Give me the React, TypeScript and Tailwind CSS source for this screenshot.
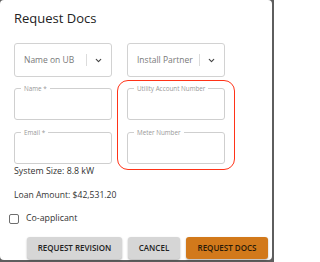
import { ChevronDown } from 'lucide-react';

function SelectBox({ label }: { label: string }) {
  return (
    <div className="flex h-[34px] items-center rounded-[3px] border border-[#d2d2d2] bg-white pl-[9px] pr-[8px]">
      <span className="flex-1 truncate text-[8.5px] text-[#7a7a7a]">{label}</span>
      <span className="mr-[7px] h-[12px] w-px bg-[#dcdcdc]" />
      <ChevronDown className="h-[9px] w-[9px] text-[#444]" strokeWidth={3} />
    </div>
  );
}

function TextField({ label }: { label: string }) {
  return (
    <div className="relative h-[32px] rounded-[3px] border border-[#cfcfcf] bg-white">
      <span className="absolute -top-[4px] left-[6px] bg-white px-[3px] text-[6.3px] leading-[7px] text-[#999]">
        {label}
      </span>
    </div>
  );
}

export default function App() {
  return (
    <div className="h-[262px] w-[274px] bg-[#5e5e5e] font-['Open_Sans',sans-serif]">
      <div className="relative h-[260px] w-[272px] rounded-[4px] bg-white">
        <h2 className="pl-[14px] pt-[10px] text-[13px] font-medium leading-[16px] text-[#222]">Request Docs</h2>

        <div className="relative ml-[14px] mt-[17px] grid w-[211px] grid-cols-[98px_98px] gap-x-[15px]">
          <SelectBox label="Name on UB" />
          <SelectBox label="Install Partner" />
          <div className="mt-[11px]">
            <TextField label="Name *" />
          </div>
          <div className="mt-[11px]">
            <TextField label="Utility Account Number" />
          </div>
          <div className="mt-[12px]">
            <TextField label="Email *" />
          </div>
          <div className="mt-[12px]">
            <TextField label="Meter Number" />
          </div>
          <div className="pointer-events-none absolute left-[103px] top-[37px] h-[90px] w-[118px] rounded-[11px] border-[1.7px] border-[#ff3318]" />
        </div>

        <p className="ml-[14px] mt-[1px] text-[8.8px] leading-[12px] text-[#333]">System Size: 8.8 kW</p>
        <p className="ml-[14px] mt-[12px] text-[8.6px] leading-[12px] text-[#333]">Loan Amount: $42,531.20</p>

        <label className="ml-[9px] mt-[12px] flex h-[12px] items-center gap-[7px]">
          <span className="h-[10px] w-[10px] rounded-[2px] border border-[#6e6e6e]" />
          <span className="text-[8.8px] text-[#333]">Co-applicant</span>
        </label>

        <div className="mt-[12px] flex justify-end gap-[6px] pr-[4px]">
          <button className="h-[22px] w-[95px] rounded-[3px] bg-[#d6d6d6] text-[8px] font-semibold text-[#222] shadow-[0_1px_2px_rgba(0,0,0,0.3)]">
            REQUEST REVISION
          </button>
          <button className="h-[22px] w-[52px] rounded-[3px] bg-[#d6d6d6] text-[8px] font-semibold text-[#222] shadow-[0_1px_2px_rgba(0,0,0,0.3)]">
            CANCEL
          </button>
          <button className="h-[22px] w-[82px] rounded-[3px] bg-[#d2791b] text-[8px] font-semibold text-[#2a1a08] shadow-[0_1px_2px_rgba(0,0,0,0.3)]">
            REQUEST DOCS
          </button>
        </div>
      </div>
    </div>
  );
}
